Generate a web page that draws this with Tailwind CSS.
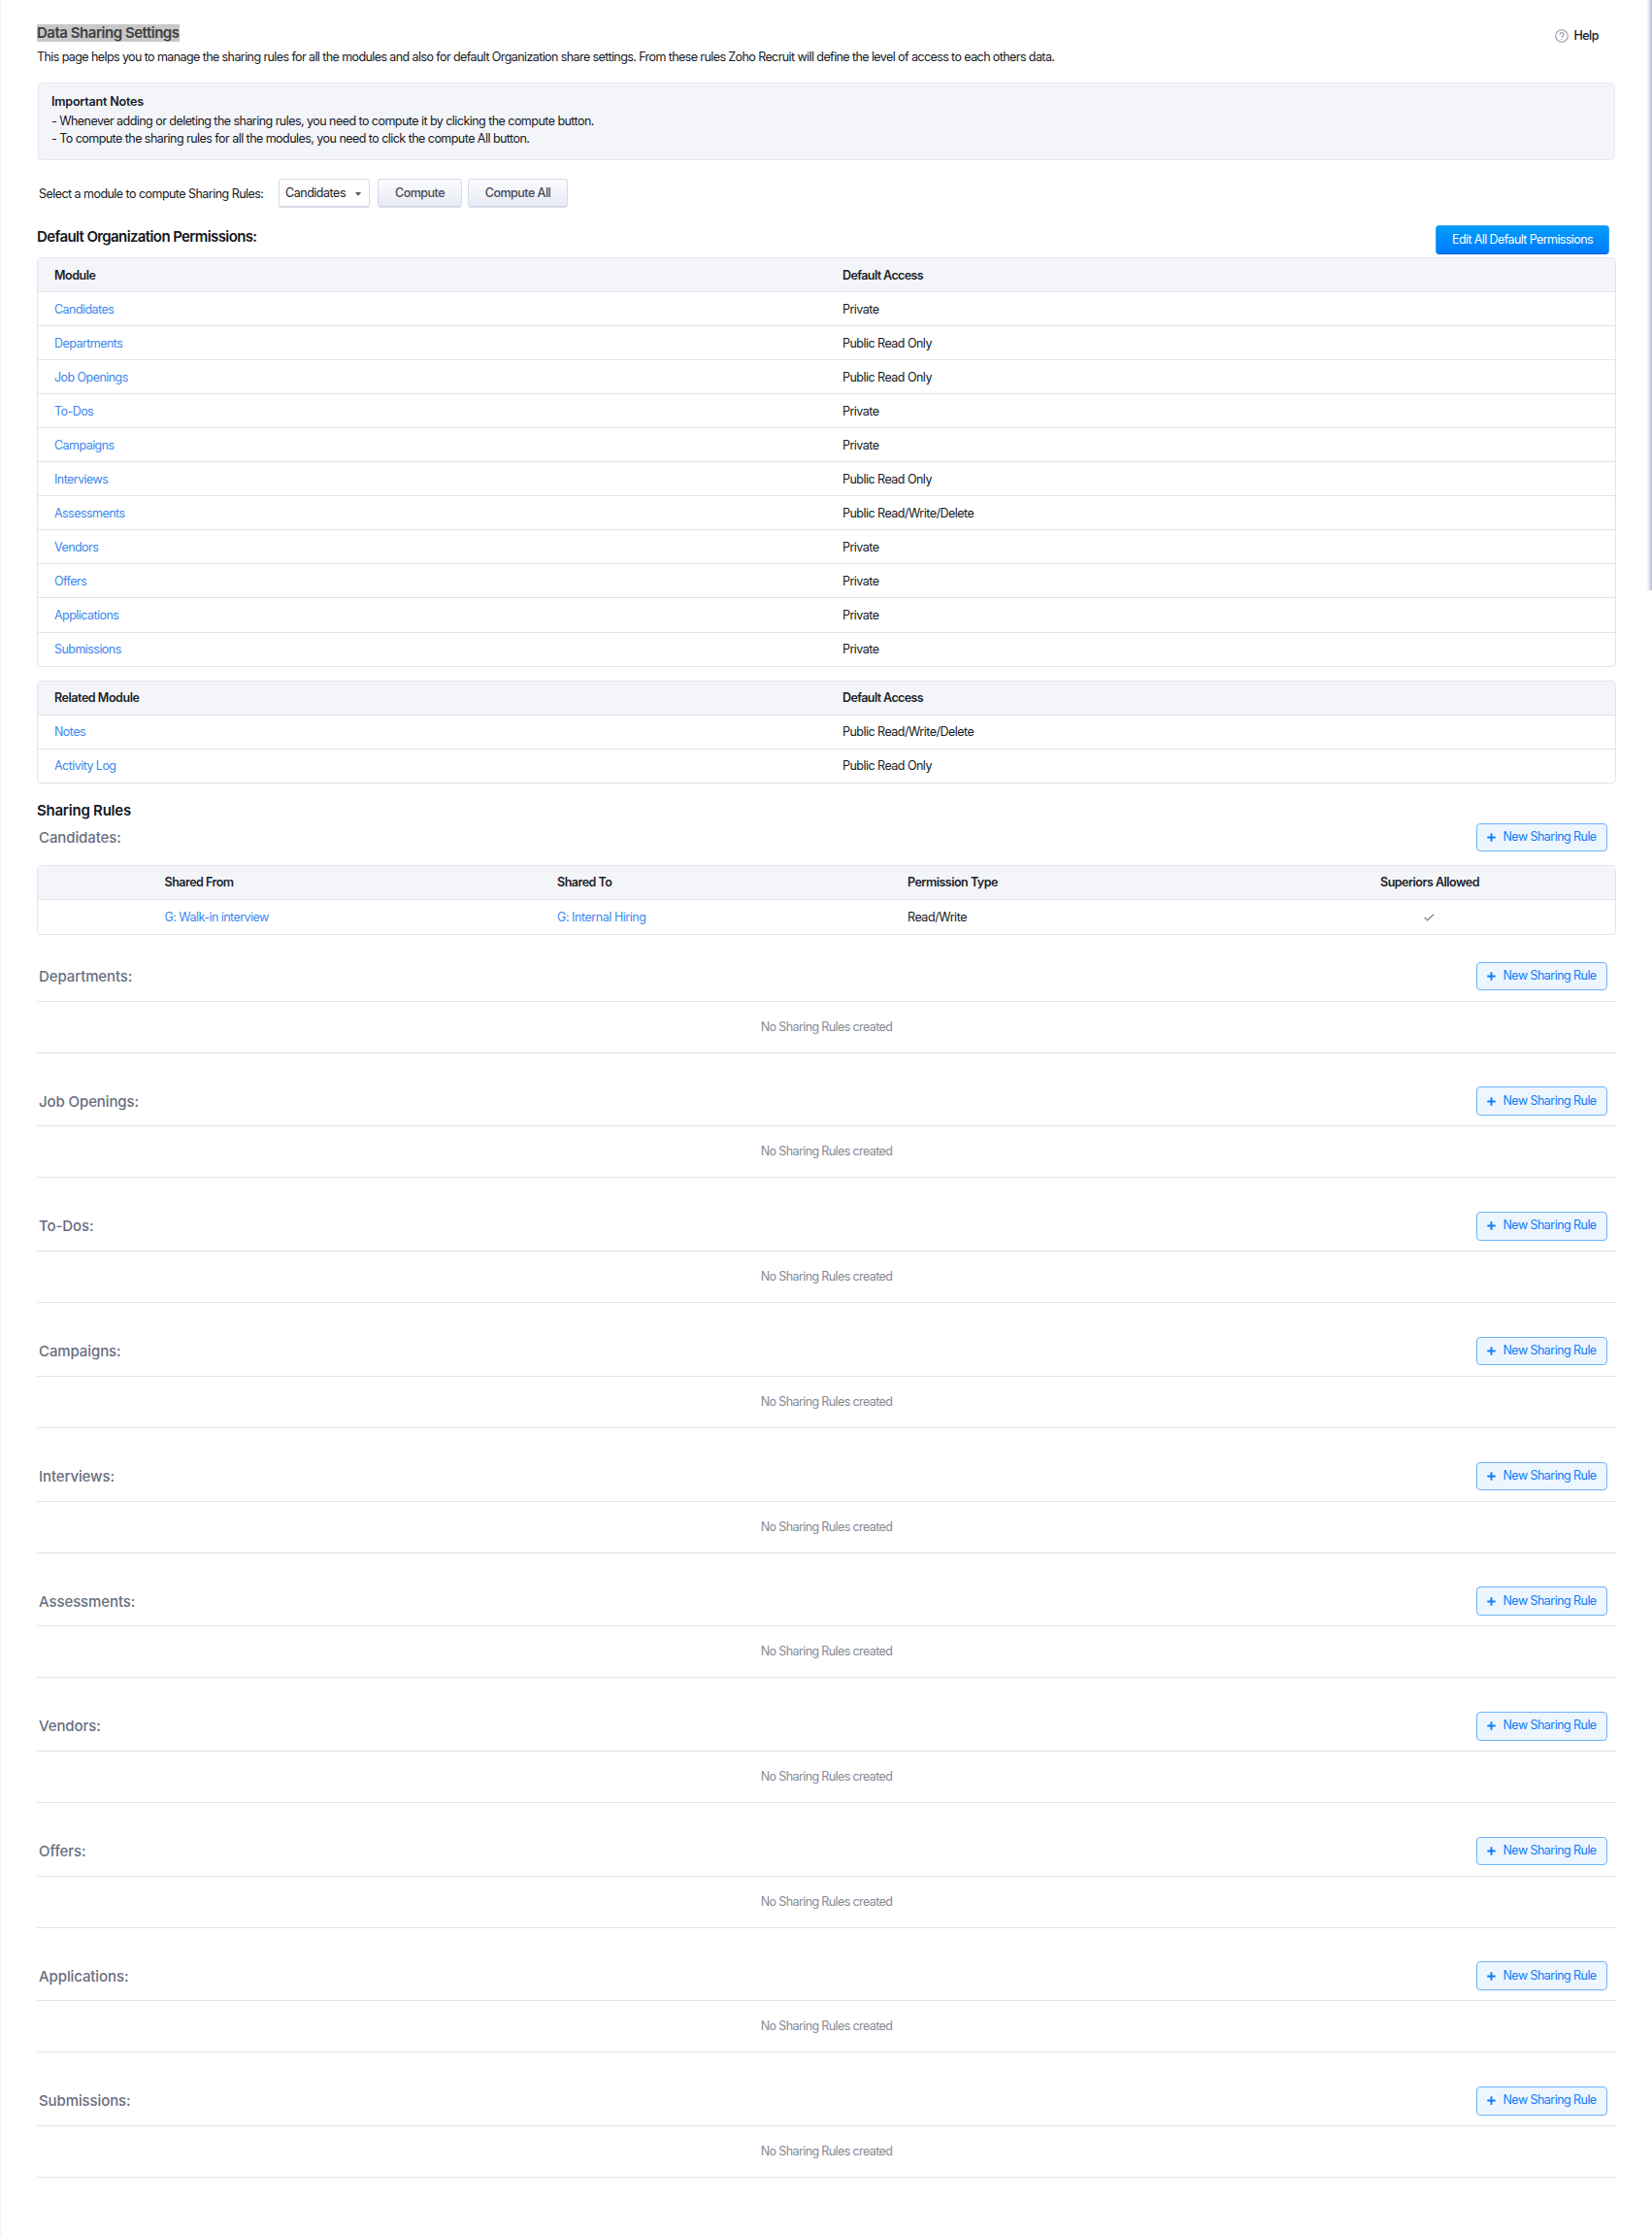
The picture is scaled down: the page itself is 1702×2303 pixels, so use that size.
<!DOCTYPE html>
<html lang="en">
<head>
<meta charset="utf-8">
<title>Data Sharing Settings</title>
<script src="https://cdn.jsdelivr.net/npm/@tailwindcss/browser@4"></script>
</head>
<body class="bg-white">
<div class="relative h-[2303px] w-[1702px] overflow-hidden border-l border-[#eff0f8] pl-[37px] pt-[25px] font-['Inter','Liberation_Sans',sans-serif] text-[12.5px] leading-[18px] tracking-[-0.54px] text-[#161925]">
  <!-- edge shadow of the side panel -->
  <div class="absolute right-0 top-0 h-[608px] w-[6px] bg-linear-to-r from-white via-[#e6e6ee] to-[#b9bacb]"></div>

  <main class="w-[1627px]">
    <header class="flex h-[60px] justify-between">
      <div>
        <h1 class="flex text-[15px] font-semibold tracking-[-0.48px] text-[#3f3f43]"><span class="bg-[#c8c8c8]">Data Sharing Settings</span></h1>
        <p class="mt-[7px] whitespace-nowrap tracking-[-0.589px]">This page helps you to manage the sharing rules for all the modules and also for default Organization share settings. From these rules Zoho Recruit will define the level of access to each others data.</p>
      </div>
      <a class="mr-[18px] mt-[3px] flex h-[18px] items-center gap-[5px] font-medium tracking-[-0.5px]">
        <svg class="size-[14px]" viewBox="0 0 14 14" fill="none" stroke="#9496a4" stroke-width="1.1" stroke-linecap="round"><circle cx="7" cy="7" r="6.3"/><path d="M5.1 5.5a1.95 1.95 0 1 1 2.9 1.7C7.3 7.6 7 7.9 7 8.6"/><path d="M7 10.2v.2"/></svg>Help</a>
    </header>

    <section class="ml-px h-[80px] w-[1625px] rounded-[4px] border border-[#e6e9f4] bg-[#f4f5f9] px-[13px] pt-[10px]">
      <h2 class="font-semibold tracking-[-0.2px]">Important Notes</h2>
      <p class="mt-[1.5px]">- Whenever adding or deleting the sharing rules, you need to compute it by clicking the compute button.</p>
      <p>- To compute the sharing rules for all the modules, you need to click the compute All button.</p>
    </section>

    <div class="ml-[2px] mt-[19px] flex h-[30px]">
      <label class="w-[247px] pt-[7px]">Select a module to compute Sharing Rules:</label>
      <div class="flex w-[94px] items-center justify-between rounded-[3px] border border-b-2 border-[#d5d9e6] bg-white pl-[6px] pr-[8px] pt-px tracking-[-0.47px]">Candidates<svg class="mt-px h-[4px] w-[6px]" viewBox="0 0 6 4"><path d="M0 0h6L3 4z" fill="#555a6a"/></svg></div>
      <button class="ml-[8px] flex w-[87px] justify-center rounded-[4px] border border-b-2 border-[#d5d9e6] bg-linear-to-b from-[#fbfcfe] to-[#e8ebf4] pt-[4.5px] font-medium tracking-[-0.5px] text-[#444a59]">Compute</button>
      <button class="ml-[6px] flex w-[103px] justify-center rounded-[4px] border border-b-2 border-[#d5d9e6] bg-linear-to-b from-[#fbfcfe] to-[#e8ebf4] pt-[4.5px] font-medium tracking-[-0.5px] text-[#444a59]">Compute All</button>
    </div>

    <div class="flex h-[51px] justify-between">
      <h2 class="pt-[20.5px] text-[15px] font-semibold tracking-[-0.61px] text-[#14161f]">Default Organization Permissions:</h2>
      <button class="mr-[7px] mt-[18px] flex h-[29.5px] w-[179px] justify-center rounded-[4px] border border-[#2fa3f5] border-b-[#0062d6] bg-linear-to-b from-[#069df9] to-[#0179fe] pt-[4.5px] tracking-[-0.6px] text-white">Edit All Default Permissions</button>
    </div>

    <div id="modules" class="rounded-[4px] border border-[#e0e4f0]"></div>
    <div id="related" class="mt-[14px] rounded-[4px] border border-[#e0e4f0]"></div>

    <h2 class="mt-[19px] text-[15px] font-semibold tracking-[-0.23px] text-[#14161f]">Sharing Rules</h2>
    <div class="mb-[14px] mt-[4px]" id="first"></div>
    <div class="rounded-[4px] border border-[#e0e4f0]">
      <div class="grid h-[35px] grid-cols-[130.5px_404.5px_361px_487px_auto] items-center border-b border-[#e0e4f0] bg-[#f4f5f9] font-semibold tracking-[-0.5px] text-[#1b1e29]">
        <span></span><span>Shared From</span><span>Shared To</span><span>Permission Type</span><span>Superiors Allowed</span>
      </div>
      <div class="grid h-[35px] grid-cols-[130.5px_404.5px_361px_487px_auto] items-center pt-px">
        <span></span><a class="text-[#3b87ee]">G: Walk-in interview</a><a class="tracking-[-0.45px] text-[#3b87ee]">G: Internal Hiring</a><span class="tracking-[-0.45px]">Read/Write</span>
        <svg class="ml-[45px] h-[8px] w-[11px]" viewBox="0 0 11 8" fill="none" stroke="#7d818f" stroke-width="1.3"><path d="M.7 4l3 2.9L10 .8"/></svg>
      </div>
    </div>
    <div id="rules" class="mt-[27.4px]"></div>
  </main>
</div>
<script>
const table = (id, title, rows) => {
  document.getElementById(id).innerHTML =
    `<div class="grid h-[35.06px] grid-cols-2 items-center border-b border-[#e0e4f0] bg-[#f4f5f9] pl-[17px] pt-px font-semibold tracking-[-0.6px] text-[#1b1e29]"><span class="tracking-[-0.45px]">${title}</span><span class="pl-[8px]">Default Access</span></div>` +
    rows.map(([name, access]) =>
      `<div class="grid h-[35.06px] grid-cols-2 items-center border-b border-[#e0e4f0] pl-[17px] pt-px last:h-[34.06px] last:border-b-0"><a class="tracking-[-0.55px] text-[#3b87ee]">${name}</a><span class="pl-[8px] tracking-[-0.52px]">${access}</span></div>`).join('');
};
const P = 'Private', R = 'Public Read Only', W = 'Public Read/Write/Delete';
table('modules', 'Module', [['Candidates', P], ['Departments', R], ['Job Openings', R], ['To-Dos', P], ['Campaigns', P], ['Interviews', R], ['Assessments', W], ['Vendors', P], ['Offers', P], ['Applications', P], ['Submissions', P]]);
table('related', 'Related Module', [['Notes', W], ['Activity Log', R]]);

const bar = name => `<div class="flex h-[29.5px] items-center justify-between pl-[2px] pr-[9px]">
  <h3 class="pt-px text-[15px] font-medium tracking-[-0.1px] text-[#686e7f]">${name}:</h3>
  <button class="flex h-[29.5px] w-[135.5px] items-center gap-[8px] rounded-[4px] border border-[#6db3fb] bg-[#edf5fe] pb-px pl-[10px] tracking-[-0.55px] text-[#0f7cfb]"><svg class="mt-px h-[9px] w-[9px]" viewBox="0 0 9 9" stroke="#0f7cfb" stroke-width="1.9"><path d="M4.5 .3v8.4M.3 4.5h8.4"/></svg>New Sharing Rule</button></div>`;
document.getElementById('first').innerHTML = bar('Candidates');
document.getElementById('rules').innerHTML = ['Departments', 'Job Openings', 'To-Dos', 'Campaigns', 'Interviews', 'Assessments', 'Vendors', 'Offers', 'Applications', 'Submissions'].map(n =>
  `<section class="h-[128.74px]">${bar(n)}<div class="mt-[10.5px] flex h-[54px] items-center justify-center border-y border-[#e0e4f0] tracking-[-0.61px] text-[#858995]">No Sharing Rules created</div></section>`).join('');
</script>
</body>
</html>
